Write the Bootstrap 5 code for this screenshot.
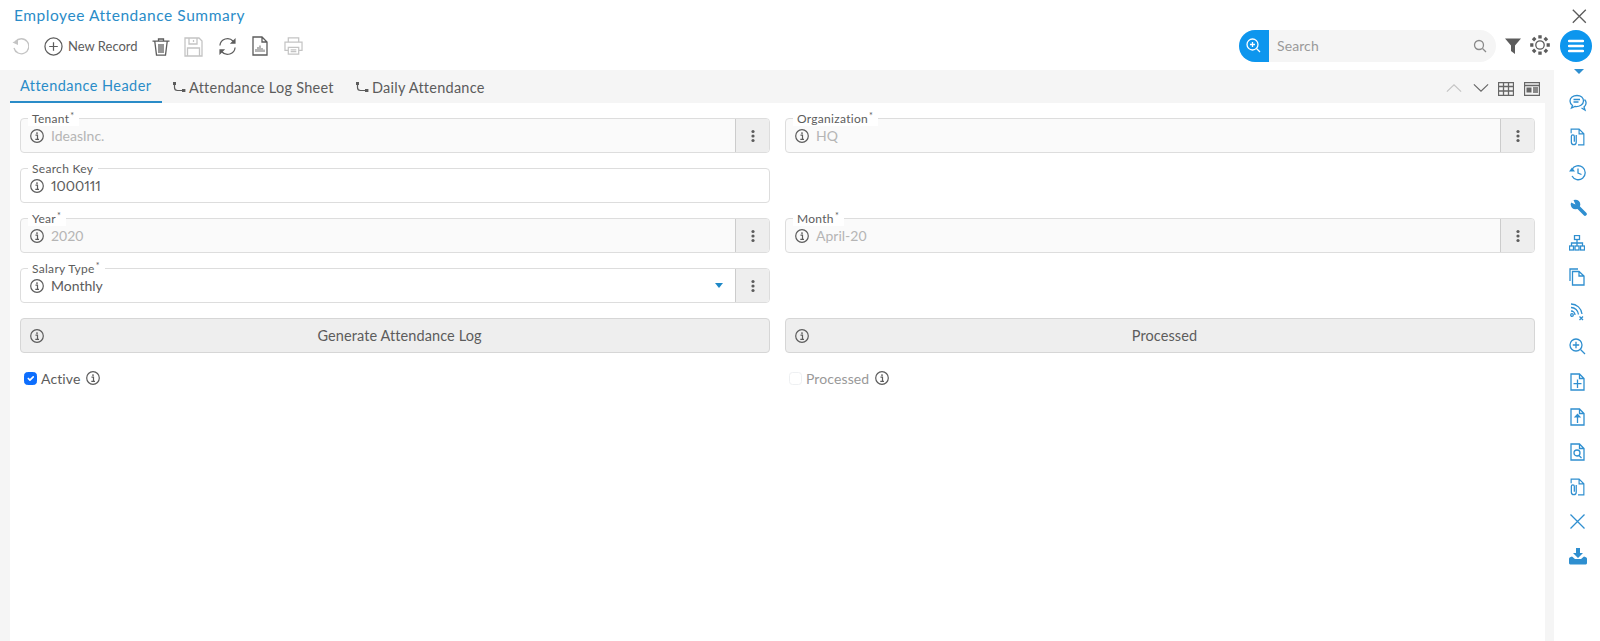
<!DOCTYPE html>
<html lang="en"><head><meta charset="utf-8"><title>Employee Attendance Summary</title>
<link rel="stylesheet" href="https://cdn.jsdelivr.net/npm/bootstrap@5.3.0/dist/css/bootstrap.min.css">
<style>
html,body{height:100%;overflow:hidden}
body{font-family:"Lato",sans-serif;color:#5c5c5c;background:#fff;font-size:14px;letter-spacing:.1px}
svg{display:block;flex:none}
.ic{fill:none;stroke:currentColor;stroke-width:1.3}
.app-top{height:70px;position:relative}
.app-title{position:absolute;left:14px;top:5px;font-size:15.5px;color:#2a8cc8;letter-spacing:.55px;line-height:20px}
.tool-row{position:absolute;left:10px;top:30px;height:32px}
.tool{position:absolute;top:6px;color:#5c5c5c}
.tool.off{color:#c4c4c4}
.new-rec{position:absolute;left:58px;top:7px;font-size:13px;color:#5c5c5c;line-height:18px;white-space:nowrap;letter-spacing:0}
.close-x{position:absolute;left:1570px;top:7px;color:#5c5c5c}
.search-pill{position:absolute;left:1239px;top:30px;width:257px;height:32px;background:#f5f5f5;border-radius:16px;overflow:hidden}
.search-btn{width:30px;background:#0d96ee;color:#fff}
.search-txt{font-size:14px;color:#9a9a9a;padding-left:8px;padding-bottom:2px}
.search-glass{margin-right:9px;color:#8a8a8a}
.funnel{position:absolute;left:1505px;top:38px;color:#5c5c5c}
.gear{position:absolute;left:1530px;top:35px;color:#5c5c5c}
.burger{position:absolute;left:1560px;top:30px;width:32px;height:32px;border-radius:50%;background:#0d96ee}
.main-wrap{height:571px}
.panel{width:1554px;background:#f5f5f5;padding:0 9px 0 10px}
.tab-bar{height:33px;position:relative}
.tab-one{height:33px;padding:3px 10px 0;font-size:14.5px;color:#5c5c5c;gap:3px;white-space:nowrap;letter-spacing:.25px}
.tab-one.on{color:#2a8cc8;border-bottom:2px solid #2a8cc8;width:152px;padding-top:1px;letter-spacing:.45px}
.tab-one.t2{width:183px;padding-left:10px}
.tab-tools{position:absolute;top:10px;color:#666}
.sheet{background:#fff;height:538px;padding:15px 10px 0 10px}
.form-grid{display:grid;grid-template-columns:750px 750px;column-gap:15px;row-gap:15px}
.fld{height:35px;border:1px solid #ddd;border-radius:4px;position:relative;background:#fff}
.fld.off{background:#fafafa}
.fld-label{position:absolute;left:7px;top:-8px;background:#fff;padding:0 5px 0 4px;font-size:12px;line-height:15px;color:#5c5c5c;letter-spacing:.3px}
.fld-label sup{font-size:9px;top:-.4em;margin-left:1px}
.fld-val{height:100%;padding-left:9px;gap:7px;font-size:14px;color:#5c5c5c;letter-spacing:0}
.fld.off .fld-val{color:#b5b5b5}
.fld.off .fld-val .i-info{color:#5c5c5c}
.num-val{font-variant-numeric:proportional-nums;font-feature-settings:"pnum"}
.dots{width:34px;height:100%;border-left:1px solid #ccc;background:#eee;border-radius:0 3px 3px 0;color:#5c5c5c}
.caret-b{width:0;height:0;border-left:4.5px solid transparent;border-right:4.5px solid transparent;border-top:5px solid #1e88c7;margin-right:5px}
.act{height:35px;background:#eee;border:1px solid #d6d6d6;border-radius:4px;position:relative;font-size:14.5px;color:#5c5c5c;padding-left:9px}
.act svg{position:absolute;left:9px;top:10px}
.i-info{color:#5c5c5c}
.chk-row{height:20px;padding-left:4px;gap:4px;font-size:14px}
.chk-row.off{color:#999}
.chk-row input{margin:0;width:13px;height:13px}
.chk-row .i-info{margin-left:2px}
.side-rail{width:46px;color:#2f8fd0;position:relative}
.rail-i{position:absolute;left:15px}
</style></head><body>
<svg width="0" height="0" style="position:absolute"><defs>
<symbol id="info" viewBox="0 0 14 14"><circle cx="7" cy="7" r="6.300" fill="none" stroke="currentColor" stroke-width="1.200"/><circle cx="7" cy="4.100" r=".9" fill="currentColor"/><path d="M5.500 6.200H7.500V10.200M5.300 10.400H9" fill="none" stroke="currentColor" stroke-width="1.200"/></symbol>
<symbol id="dots3" viewBox="0 0 4 14"><circle cx="2" cy="2.500" r="1.600" fill="currentColor"/><circle cx="2" cy="7" r="1.600" fill="currentColor"/><circle cx="2" cy="11.500" r="1.600" fill="currentColor"/></symbol>
<symbol id="branch" viewBox="0 0 14 12"><path d="M2.500 1.500V5.500Q2.500 8.500 5.500 8.500H11" fill="none" stroke="currentColor" stroke-width="1.200"/><rect x="1" y="0" width="3" height="3" fill="currentColor"/><rect x="10" y="7" width="3.400" height="3" fill="currentColor"/></symbol>
<symbol id="clip" viewBox="0 0 14 17"><path d="M1 5V1H8.500L13 5.500V16H7.500M8.500 1V5.500H13" fill="none" stroke="currentColor" stroke-width="1.100"/><path d="M5.800 6.500V13.500A2.300 2.300 0 0 1 1.200 13.500V7.800A1.400 1.400 0 0 1 4 7.800V13" fill="none" stroke="currentColor" stroke-width="1.200"/></symbol>
</defs></svg>

<header class="app-top">
  <div class="app-title">Employee Attendance Summary</div>
  <div class="tool-row">
    <svg class="tool off" style="left:2px;top:8px" width="17" height="17" viewBox="1 2 17 17"><path d="M4.500 5.500A7.500 7.500 0 1 1 3 12" class="ic" stroke-width="1.600"/><path d="M1.500 6.500L7 3.500V9Z" fill="currentColor"/></svg>
    <svg class="tool" style="left:34px;top:7px" width="19" height="19" viewBox="0 0 20 20"><circle cx="10" cy="10" r="9" class="ic" stroke-width="1.300"/><path d="M10 5.500V14.500M5.500 10H14.500" class="ic" stroke-width="1.600"/></svg>
    <span class="new-rec">New Record</span>
    <svg class="tool" style="left:142px;top:8px" width="18" height="18" viewBox="0 0 18 18"><path d="M.5 3.200H17.500M6.500 3V1H11.500V3M2.800 3.500L4.500 17.200H13.500L15.200 3.500M7 6V15M9 6V15M11 6V15" class="ic"/></svg>
    <svg class="tool off" style="left:174px;top:7px" width="19" height="20" viewBox="0 0 19 20"><path d="M1 1H15L18 4V19H1ZM5 1V7H13V1M3.500 19V11H15.500V19M9.500 3V5" class="ic"/></svg>
    <svg class="tool" style="left:208px;top:7px" width="19" height="19" viewBox="0 0 20 20"><path d="M2 9A8 8 0 0 1 16 4.500M18 11A8 8 0 0 1 4 15.500" class="ic" stroke-width="1.800"/><path d="M18.500 1V7H12.500ZM1.500 19V13H7.500Z" fill="currentColor"/></svg>
    <svg class="tool" style="left:242px;top:6px" width="16" height="20" viewBox="0 0 16 20"><path d="M1 1H10L15 6V19H1ZM10 1V6H15" class="ic" stroke-width="1.400"/><path d="M4 16V13M6 16V11M8 16V9.500M10 16V12M12 16V13.500" class="ic" stroke-width="1.300" opacity=".7"/></svg>
    <svg class="tool off" style="left:274px;top:7px" width="19" height="18" viewBox="0 0 20 19"><path d="M4.500 5V1H15.500V5M4.500 14H1V5.500H19V14H15.500M4.500 11H15.500V18H4.500ZM7 13.500H13M7 15.500H13" class="ic"/></svg>
  </div>
  <svg class="close-x" width="18" height="18" viewBox="0 0 18 18"><path d="M2.800 2.800L15.800 15.800M15.800 2.800L2.800 15.800" class="ic" stroke-width="2"/></svg>
  <div class="search-pill d-flex align-items-center">
    <div class="search-btn h-100 d-flex align-items-center justify-content-center"><svg width="18" height="18" viewBox="0 0 18 18"><circle cx="7.500" cy="7.500" r="5.500" class="ic" stroke-width="1.500"/><path d="M7.500 5V10M5 7.500H10" class="ic" stroke-width="1.300"/><path d="M11.500 11.500L15 15" class="ic" stroke-width="2.200"/></svg></div>
    <span class="search-txt flex-grow-1">Search</span>
    <svg class="search-glass" width="14" height="14" viewBox="0 0 14 14"><circle cx="6" cy="6" r="4.500" class="ic" stroke-width="1.500"/><path d="M9.500 9.500L13 13" class="ic" stroke-width="2"/></svg>
  </div>
  <svg class="funnel" width="16" height="16" viewBox="0 0 16 16"><path d="M0 .5H16L10 7.500V16L6 13V7.500Z" fill="currentColor"/></svg>
  <svg class="gear" width="20" height="20" viewBox="0 0 20 20"><circle cx="10" cy="10" r="4.200" class="ic" stroke-width="2.400"/><g stroke="currentColor" stroke-width="3.400"><path d="M10 .2V3.400M10 16.600V19.800M.2 10H3.400M16.600 10H19.800M3 3L5.300 5.300M14.700 14.700L17 17M17 3L14.700 5.300M5.300 14.700L3 17"/></g></svg>
  <div class="burger d-flex align-items-center justify-content-center"><svg width="16" height="14" viewBox="0 0 16 14"><path d="M1 2H15M1 7H15M1 12H15" stroke="#fff" stroke-width="2.400" stroke-linecap="round"/></svg></div>
</header>

<div class="main-wrap d-flex">
  <main class="panel">
    <div class="tab-bar d-flex">
      <div class="tab-one on d-flex align-items-center">Attendance Header</div>
      <div class="tab-one t2 d-flex align-items-center"><svg width="14" height="12"><use href="#branch"/></svg>Attendance Log Sheet</div>
      <div class="tab-one d-flex align-items-center"><svg width="14" height="12"><use href="#branch"/></svg>Daily Attendance</div>
      <svg class="tab-tools" style="left:1436px;color:#c4c4c4;top:13px" width="16" height="10" viewBox="0 0 18 10"><path d="M1 9L9 1.500L17 9" class="ic" stroke-width="1.400"/></svg>
      <svg class="tab-tools" style="left:1463px;top:13px" width="16" height="10" viewBox="0 0 18 10"><path d="M1 1L9 8.500L17 1" class="ic" stroke-width="1.400"/></svg>
      <svg class="tab-tools" style="left:1488px;top:12px" width="16" height="14" viewBox="0 0 16 14"><path d="M.5 .5H15.500V13.500H.5ZM.5 4.500H15.500M.5 9H15.500M5.500 .5V13.500M10.500 .5V13.500" class="ic" stroke-width="1"/></svg>
      <svg class="tab-tools" style="left:1514px;top:12px" width="16" height="14" viewBox="0 0 16 14"><path d="M.5 .5H15.500V13.500H.5ZM.5 3.500H15.500" class="ic" stroke-width="1"/><rect x="2.500" y="5.500" width="5" height="5" fill="currentColor"/><path d="M9 6H14M9 8H14M9 10H14" class="ic" stroke-width="1"/></svg>
    </div>
    <div class="sheet">
      <div class="form-grid">
        <div class="fld off"><span class="fld-label">Tenant<sup>*</sup></span><div class="fld-val d-flex align-items-center"><svg class="i-info" width="14" height="14"><use href="#info"/></svg><span class="flex-grow-1">IdeasInc.</span><div class="dots d-flex align-items-center justify-content-center"><svg width="4" height="14"><use href="#dots3"/></svg></div></div></div>
        <div class="fld off"><span class="fld-label">Organization<sup>*</sup></span><div class="fld-val d-flex align-items-center"><svg class="i-info" width="14" height="14"><use href="#info"/></svg><span class="flex-grow-1">HQ</span><div class="dots d-flex align-items-center justify-content-center"><svg width="4" height="14"><use href="#dots3"/></svg></div></div></div>

        <div class="fld"><span class="fld-label">Search Key</span><div class="fld-val d-flex align-items-center"><svg class="i-info" width="14" height="14"><use href="#info"/></svg><span class="num-val">1000111</span></div></div>
        <div></div>

        <div class="fld off"><span class="fld-label">Year<sup>*</sup></span><div class="fld-val d-flex align-items-center"><svg class="i-info" width="14" height="14"><use href="#info"/></svg><span class="flex-grow-1">2020</span><div class="dots d-flex align-items-center justify-content-center"><svg width="4" height="14"><use href="#dots3"/></svg></div></div></div>
        <div class="fld off"><span class="fld-label">Month<sup>*</sup></span><div class="fld-val d-flex align-items-center"><svg class="i-info" width="14" height="14"><use href="#info"/></svg><span class="flex-grow-1">April-20</span><div class="dots d-flex align-items-center justify-content-center"><svg width="4" height="14"><use href="#dots3"/></svg></div></div></div>

        <div class="fld"><span class="fld-label">Salary Type<sup>*</sup></span><div class="fld-val d-flex align-items-center"><svg class="i-info" width="14" height="14"><use href="#info"/></svg><span class="flex-grow-1">Monthly</span><span class="caret-b"></span><div class="dots d-flex align-items-center justify-content-center"><svg width="4" height="14"><use href="#dots3"/></svg></div></div></div>
        <div></div>

        <div class="act d-flex align-items-center justify-content-center"><svg class="i-info" width="14" height="14"><use href="#info"/></svg>Generate Attendance Log</div>
        <div class="act d-flex align-items-center justify-content-center"><svg class="i-info" width="14" height="14"><use href="#info"/></svg>Processed</div>

        <div class="chk-row d-flex align-items-center"><input type="checkbox" class="form-check-input" checked aria-label="Active"><span>Active</span><svg class="i-info" width="14" height="14"><use href="#info"/></svg></div>
        <div class="chk-row off d-flex align-items-center"><input type="checkbox" class="form-check-input" disabled aria-label="Processed"><span>Processed</span><svg class="i-info" width="14" height="14"><use href="#info"/></svg></div>
      </div>
    </div>
  </main>
  <aside class="side-rail">
    <svg class="rail-i" style="top:-1px;left:20px" width="10" height="5" viewBox="0 0 10 5"><path d="M0 0H10L5 5Z" fill="currentColor"/></svg>
    <svg class="rail-i" style="top:24px" width="18" height="18" viewBox="0 0 18 18"><path d="M8 1.500C4 1.500 1 3.800 1 7C1 9 2 10.500 3.500 11.500L2.500 14L6 12.500C10.500 13 14.500 10.500 14.500 7C14.500 3.800 12 1.500 8 1.500ZM4.500 5.500H11M4.500 8H9.500M15.500 5.500C17 7 17.500 9 16.500 11C16 12 15.500 12.500 15 13L16 16L12.500 14" class="ic" stroke-width="1.200"/></svg>
    <svg class="rail-i" style="top:58px;left:16px" width="15" height="18"><use href="#clip"/></svg>
    <svg class="rail-i" style="top:94px" width="17" height="17" viewBox="0 0 17 17"><path d="M3 5.500A7 7 0 1 1 3 12" class="ic" stroke-width="1.600"/><path d="M0 7.500H6L3 3.500Z" fill="currentColor"/><path d="M9 4.500V9L12.500 10.500" class="ic" stroke-width="1.600"/></svg>
    <svg class="rail-i" style="top:129px;left:16px" width="17" height="17" viewBox="0 0 17 17"><circle cx="5.500" cy="5.500" r="4.800" fill="currentColor"/><path d="M6 6L15 15" stroke="currentColor" stroke-width="3.600" stroke-linecap="round"/><path d="M5.500 5.500L.5 3.200L3.200 .5Z" fill="#fff"/></svg>
    <svg class="rail-i" style="top:165px" width="16" height="16" viewBox="0 0 16 16"><rect x="5.500" y=".5" width="5" height="4" class="ic"/><rect x=".5" y="11" width="4" height="4" class="ic"/><rect x="6" y="11" width="4" height="4" class="ic"/><rect x="11.500" y="11" width="4" height="4" class="ic"/><path d="M8 4.500V11M2.500 11V8H13.500V11" class="ic"/></svg>
    <svg class="rail-i" style="top:198px" width="16" height="18" viewBox="0 0 16 18"><path d="M1 13V1H9" class="ic" stroke-width="1.600"/><path d="M3.500 3.500H10L15 8V17H3.500ZM10 3.500V8H15" class="ic" stroke-width="1.300"/></svg>
    <svg class="rail-i" style="top:233px;left:16px" width="16" height="18" viewBox="0 0 16 18"><path d="M1 1A11 11 0 0 1 12 11M1 4.500A7.500 7.500 0 0 1 8.500 11.500M1 8A4 4 0 0 1 5 12" class="ic" stroke-width="1.500"/><circle cx="2" cy="12" r="1.300" class="ic" stroke-width=".8"/><path d="M9.500 13.500L13 17M13 13.500L9.500 17" class="ic" stroke-width="1.100"/></svg>
    <svg class="rail-i" style="top:268px" width="18" height="18" viewBox="0 0 18 18"><circle cx="7" cy="7" r="6" class="ic" stroke-width="1"/><path d="M7 3.800V10.200M3.800 7H10.200" class="ic" stroke-width="1.100"/><path d="M11.500 11.500L16 16" class="ic" stroke-width="2"/></svg>
    <svg class="rail-i" style="top:303px;left:16px" width="15" height="18" viewBox="0 0 15 18"><path d="M1 1H9.500L14 5.500V17H1ZM9.500 1V5.500H14" class="ic" stroke-width="1.200"/><path d="M7.500 6.500V15M3.500 10.700H11.500" class="ic" stroke-width="2.300"/></svg>
    <svg class="rail-i" style="top:338px;left:16px" width="15" height="18" viewBox="0 0 15 18"><path d="M1 1H9.500L14 5.500V17H1ZM9.500 1V5.500H14" class="ic" stroke-width="1.200"/><path d="M7.500 15V8" class="ic" stroke-width="2.200"/><path d="M3.800 9.500L7.500 5.500L11.200 9.500Z" fill="currentColor"/></svg>
    <svg class="rail-i" style="top:373px;left:16px" width="15" height="18" viewBox="0 0 15 18"><path d="M1 1H9.500L14 5.500V17H1ZM9.500 1V5.500H14" class="ic" stroke-width="1.200"/><circle cx="7" cy="10" r="3" class="ic" stroke-width="1"/><path d="M9 12.500L11.500 15" class="ic" stroke-width="1.200"/></svg>
    <svg class="rail-i" style="top:408px;left:16px" width="15" height="18"><use href="#clip"/></svg>
    <svg class="rail-i" style="top:443px" width="17" height="17" viewBox="0 0 17 17"><path d="M1.500 1.500L15.500 15.500M15.500 1.500L1.500 15.500" class="ic" stroke-width="1.400"/></svg>
    <svg class="rail-i" style="top:478px" width="18" height="17" viewBox="0 0 18 17"><path d="M7 0H11V5H14L9 10L4 5H7Z" fill="currentColor"/><path d="M0 11C0 9.500 1 9 3 8.500L6 11H12L15 8.500C17 9 18 9.500 18 11V15C18 16 17 16.500 16 16.500H2C1 16.500 0 16 0 15Z" fill="currentColor"/></svg>
  </aside>
</div>
</body></html>
